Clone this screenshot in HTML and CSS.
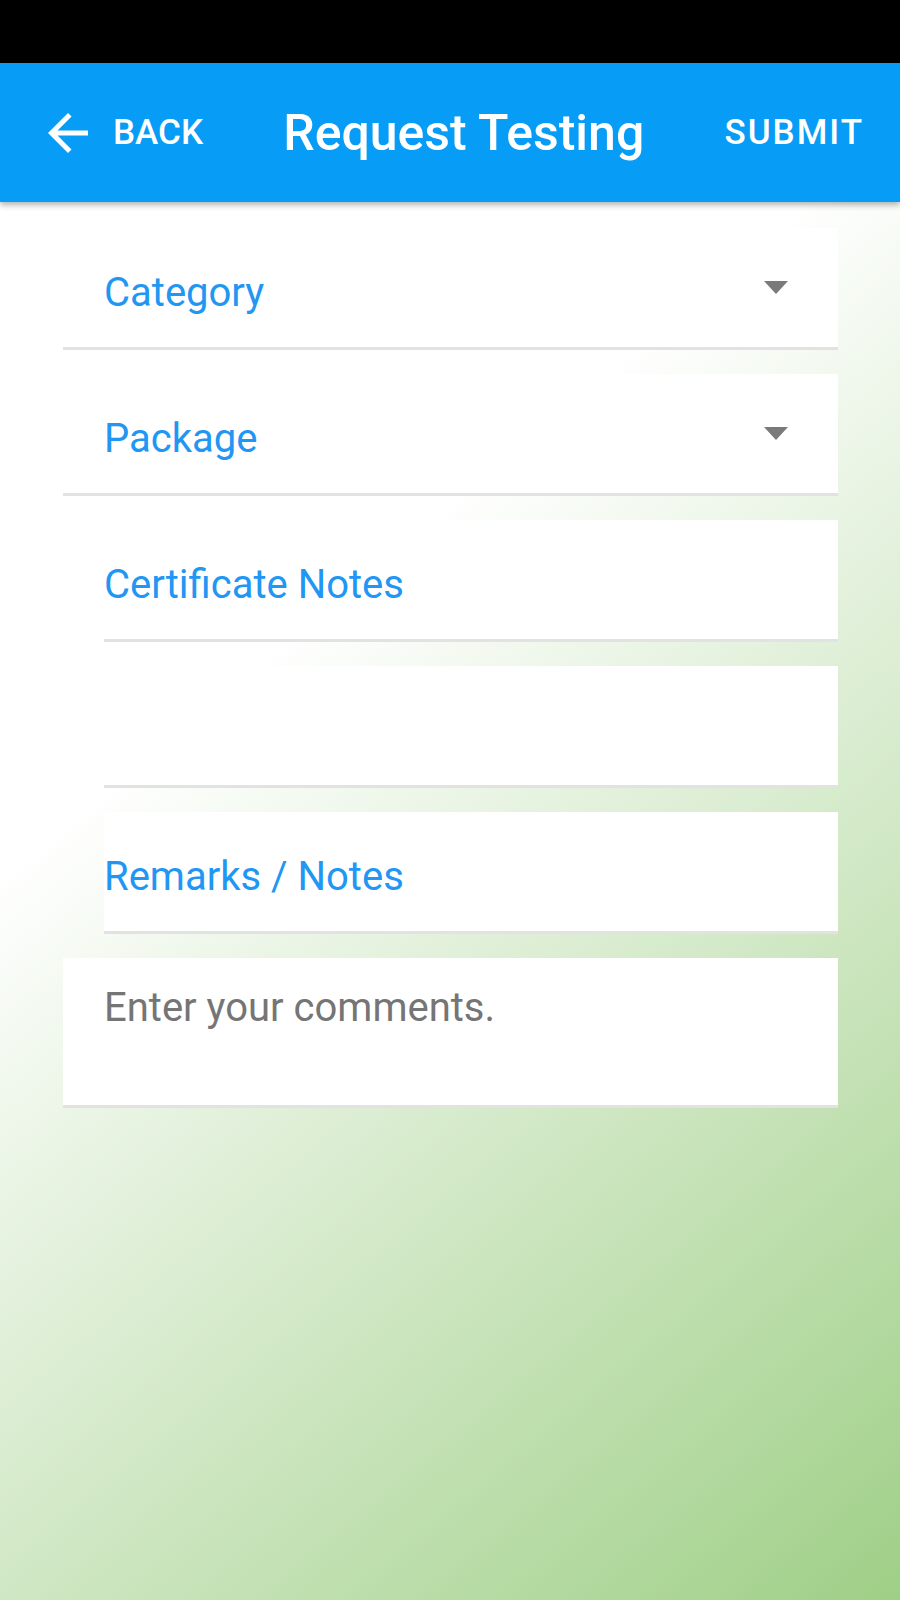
FILE: index.html
```html
<!DOCTYPE html>
<html lang="en">
<head>
  <meta charset="UTF-8">
  <meta name="viewport" content="width=device-width, initial-scale=1.0">
  <title>Request Testing</title>
  <link rel="stylesheet" href="styles.css">
</head>
<body>
  <div class="status-bar"></div>
  <header class="app-bar">
    <div class="back-button">
      <svg class="back-icon" viewBox="0 0 24 24" width="60" height="60">
        <path fill="#fff" d="M20 11H7.83l5.59-5.59L12 4l-8 8 8 8 1.41-1.41L7.83 13H20v-2z"/>
      </svg>
      <span class="bar-action">BACK</span>
    </div>
    <h1 class="bar-title">Request Testing</h1>
    <span class="bar-action bar-submit">SUBMIT</span>
  </header>

  <main class="form">
    <div class="field field-wide">
      <span class="field-label">Category</span>
      <span class="dropdown-arrow"></span>
    </div>
    <div class="field field-wide">
      <span class="field-label">Package</span>
      <span class="dropdown-arrow"></span>
    </div>
    <div class="field field-inset">
      <span class="field-label">Certificate Notes</span>
    </div>
    <div class="field field-inset"></div>
    <div class="field field-inset">
      <span class="field-label">Remarks / Notes</span>
    </div>
    <div class="comments-box">
      <span class="placeholder">Enter your comments.</span>
    </div>
  </main>
</body>
</html>
```

FILE: styles.css
```css
html {
  height: 100%;
}

body {
  margin: 0;
  min-height: 1600px;
  font-family: Roboto, 'Noto Sans', sans-serif;
  background: linear-gradient(140deg, #ffffff 37%, #9fcf87 100%);
}

.status-bar {
  height: 63px;
  background-color: #000000;
}

.app-bar {
  height: 139px;
  display: flex;
  align-items: center;
  justify-content: space-between;
  padding: 0 36px 0 38px;
  background-color: #079cf6;
  color: #fff;
  box-shadow: 0 3px 6px rgba(0, 0, 0, 0.3);
  position: relative;
}

.back-button {
  display: flex;
  align-items: center;
  gap: 15px;
}

.back-icon {
  display: block;
}

.bar-action {
  font-size: 35px;
  font-weight: 500;
}

.bar-submit {
  letter-spacing: 2px;
}

.bar-title {
  margin: 0;
  font-size: 50px;
  font-weight: 500;
}

.form {
  display: flex;
  flex-direction: column;
  gap: 24px;
  padding: 26px 62px 0 63px;
}

.field {
  height: 119px;
  display: flex;
  align-items: center;
  justify-content: space-between;
  background-color: #fff;
  border-bottom: 3px solid #e2e2e2;
}

.field-wide {
  padding-left: 41px;
  padding-right: 50px;
}

.field-inset {
  margin-left: 41px;
}

.field-label {
  padding-top: 10px;
  font-size: 40px;
  color: #2196f3;
}

/* material style dropdown caret */
.dropdown-arrow {
  width: 0;
  height: 0;
  border-left: 12px solid transparent;
  border-right: 12px solid transparent;
  border-top: 13px solid #7a7a7a;
}

.comments-box {
  height: 121px;
  padding: 26px 41px 0;
  background-color: #fff;
  border-bottom: 3px solid #e2e2e2;
}

.placeholder {
  font-size: 40px;
  color: #757575;
}
```
